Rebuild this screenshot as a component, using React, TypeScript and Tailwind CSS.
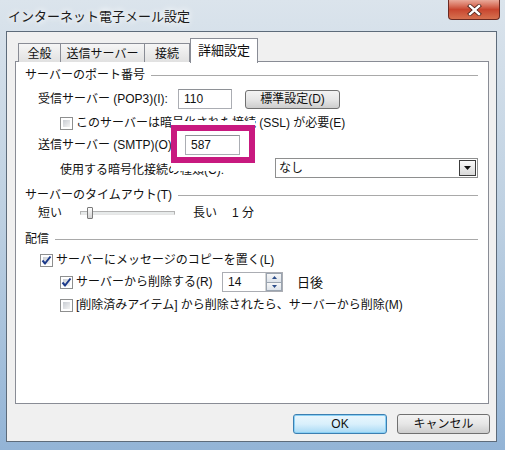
import React from 'react';

const FONT = "font-['Liberation_Sans','Noto_Sans_CJK_JP',sans-serif]";

function Check({ checked }: { checked?: boolean }) {
  return (
    <span className="relative flex h-[13px] w-[13px] shrink-0 items-center justify-center border border-[#8e8f8f] bg-white">
      <span className="absolute inset-[2px] bg-gradient-to-br from-[#c9cdd3] to-[#f4f4f4]" />
      {checked && (
        <svg className="relative" width="11" height="11" viewBox="0 0 11 11">
          <path d="M1.5 5.5 L4 8.5 L9.5 1.5" fill="none" stroke="#1c3a8a" strokeWidth="2" />
        </svg>
      )}
    </span>
  );
}

function Group({ label, className }: { label: string; className: string }) {
  return (
    <div className={`flex h-[16px] items-center pl-[9px] pr-[10px] ${className}`}>
      <span className="whitespace-nowrap">{label}</span>
      <span className="ml-[6px] h-px flex-1 bg-[#a9a9a9]" />
    </div>
  );
}

function TextBox({ value, className }: { value: string; className: string }) {
  return (
    <div
      className={`flex h-[20px] items-center border border-[#abadb3] border-t-[#8e9196] bg-white pl-[5px] ${className}`}
    >
      {value}
    </div>
  );
}

export default function App() {
  return (
    <div
      className={`${FONT} flex h-[450px] w-[505px] flex-col bg-gradient-to-b from-[#dbe4ec] via-[#bccfe1] to-[#93b4d6] text-[12px] leading-none text-[#111]`}
    >
      {/* Title bar */}
      <div className="relative flex h-[31px] shrink-0 items-center pl-[8px] pt-[2px]">
        <span className="text-[13px] text-[#1a1a1a] [text-shadow:0_0_6px_#fff,0_0_10px_#fff]">
          インターネット電子メール設定
        </span>
        <div className="absolute right-[5px] top-0 flex h-[20px] w-[52px] items-center justify-center rounded-b-[4px] border border-t-0 border-[#6b2a22] bg-gradient-to-b from-[#e9a99a] via-[#c8452f] to-[#d6704f]">
          <svg width="15" height="12" viewBox="0 0 15 12">
            <path d="M3 2 L12 10 M12 2 L3 10" stroke="#4a2018" strokeWidth="4" strokeLinecap="square" />
            <path d="M3 2 L12 10 M12 2 L3 10" stroke="#ffffff" strokeWidth="2.4" strokeLinecap="square" />
          </svg>
        </div>
      </div>

      {/* Client area */}
      <div className="ml-[6px] flex h-[411px] w-[491px] flex-col border border-[#5d6b7a] bg-[#f0f0f0] pl-[8px] pr-[7px] pt-[5px]">
        {/* Tabs */}
        <div className="relative z-10 flex h-[25px] items-end pl-[3px]">
          <div className="flex h-[19px] w-[43px] items-center justify-center border border-b-0 border-[#898c95] bg-gradient-to-b from-[#f6f6f6] to-[#e1e1e1] pt-[1px]">
            全般
          </div>
          <div className="flex h-[19px] w-[84px] items-center justify-center border border-b-0 border-l-0 border-[#898c95] bg-gradient-to-b from-[#f6f6f6] to-[#e1e1e1] pt-[1px]">
            送信サーバー
          </div>
          <div className="flex h-[19px] w-[45px] items-center justify-center border border-b-0 border-l-0 border-[#898c95] bg-gradient-to-b from-[#f6f6f6] to-[#e1e1e1] pt-[1px]">
            接続
          </div>
          <div className="-mb-px flex h-[25px] w-[68px] items-center justify-center border border-b-0 border-[#898c95] bg-white pb-[2px] text-[13px]">
            詳細設定
          </div>
        </div>

        {/* Tab panel */}
        <div className="relative -mt-px flex h-[343px] flex-col border border-[#898c95] bg-white">
          <Group label="サーバーのポート番号" className="mt-[5px]" />

          <div className="mt-[6px] flex h-[20px] items-center pl-[22px]">
            <span className="w-[140px] whitespace-nowrap">受信サーバー (POP3)(I):</span>
            <TextBox value="110" className="w-[54px]" />
            <div className="ml-[13px] flex h-[19px] w-[95px] items-center justify-center rounded-[3px] border border-[#707070] bg-gradient-to-b from-[#f3f3f3] via-[#e6e6e6] to-[#cdcdcd]">
              標準設定(D)
            </div>
          </div>

          <div className="mt-[6px] flex h-[16px] items-center gap-[3px] pl-[44px]">
            <Check />
            <span className="whitespace-nowrap">このサーバーは暗号化された接続 (SSL) が必要(E)</span>
          </div>

          <div className="mt-[4px] flex h-[20px] items-center pl-[22px]">
            <span className="w-[147px] whitespace-nowrap">送信サーバー (SMTP)(O):</span>
            <TextBox value="587" className="relative z-10 w-[55px]" />
          </div>

          <div className="mt-[3px] flex h-[20px] items-center pl-[44px]">
            <span className="w-[215px] whitespace-nowrap pt-[3px]">使用する暗号化接続の種類(C):</span>
            <div className="flex h-[20px] w-[203px] items-center justify-between border border-[#8e8f8f] bg-white pl-[3px] pr-[1px]">
              <span>なし</span>
              <div className="flex h-[16px] w-[17px] items-center justify-center border border-[#3c3c3c] bg-gradient-to-b from-[#fafafa] to-[#d9d9d9]">
                <svg width="7" height="4" viewBox="0 0 7 4">
                  <path d="M0 0 L7 0 L3.5 4 Z" fill="#111" />
                </svg>
              </div>
            </div>
          </div>

          <Group label="サーバーのタイムアウト(T)" className="mt-[9px]" />

          <div className="flex h-[20px] items-center pl-[22px]">
            <span className="w-[42px]">短い</span>
            <div className="relative h-[20px] w-[95px]">
              <div className="absolute left-0 right-0 top-[8px] h-[4px] border border-[#b3b3b3] border-b-[#e6e6e6] bg-[#e7eaea]" />
              <div className="absolute left-[7px] top-[4px] h-[12px] w-[6px] rounded-[1px] border border-[#7a7a7a] bg-gradient-to-b from-[#fdfdfd] to-[#d2d2d2]" />
            </div>
            <span className="ml-[18px]">長い</span>
            <span className="ml-[15px]">1 分</span>
          </div>

          <Group label="配信" className="mt-[8px]" />

          <div className="mt-[5px] flex h-[16px] items-center gap-[3px] pl-[24px]">
            <Check checked />
            <span className="whitespace-nowrap">サーバーにメッセージのコピーを置く(L)</span>
          </div>

          <div className="mt-[4px] flex h-[20px] items-center pl-[44px]">
            <Check checked />
            <span className="ml-[3px] w-[146px] whitespace-nowrap">サーバーから削除する(R)</span>
            <div className="flex h-[20px] w-[61px] border border-[#abadb3] bg-white">
              <span className="flex flex-1 items-center pl-[5px]">14</span>
              <div className="flex w-[17px] flex-col border-l border-[#d4d4d4]">
                <div className="flex flex-1 items-center justify-center border border-[#9aa4b0] bg-gradient-to-b from-[#f7f7f7] to-[#dde3ea]">
                  <svg width="5" height="3" viewBox="0 0 5 3">
                    <path d="M0 3 L5 3 L2.5 0 Z" fill="#2c4d8a" />
                  </svg>
                </div>
                <div className="flex flex-1 items-center justify-center border border-t-0 border-[#9aa4b0] bg-gradient-to-b from-[#f7f7f7] to-[#dde3ea]">
                  <svg width="5" height="3" viewBox="0 0 5 3">
                    <path d="M0 0 L5 0 L2.5 3 Z" fill="#2c4d8a" />
                  </svg>
                </div>
              </div>
            </div>
            <span className="ml-[14px] text-[13px]">日後</span>
          </div>

          <div className="mt-[5px] flex h-[16px] items-center gap-[3px] pl-[44px]">
            <Check />
            <span className="whitespace-nowrap">[削除済みアイテム] から削除されたら、サーバーから削除(M)</span>
          </div>

          {/* highlight box (pasted over the dialog, with a white margin) */}
          <div className="absolute left-[155px] top-[59px] z-[5] h-[50px] w-[84px] bg-white pt-[4px]">
            <div className="h-[38px] w-[84px] border-[6px] border-[#c8197f]" />
          </div>
        </div>

        {/* Buttons */}
        <div className="mt-[10px] flex justify-end gap-[10px]">
          <div className="flex h-[20px] w-[94px] items-center justify-center rounded-[3px] border border-[#3c7fb1] bg-gradient-to-b from-[#eaf6fd] via-[#d9f0fc] to-[#a7d9f5] shadow-[inset_0_0_0_1px_#8ad0f5]">
            OK
          </div>
          <div className="-mr-px flex h-[20px] w-[93px] items-center justify-center rounded-[3px] border border-[#707070] bg-gradient-to-b from-[#f3f3f3] via-[#e6e6e6] to-[#cdcdcd]">
            キャンセル
          </div>
        </div>
      </div>
    </div>
  );
}
